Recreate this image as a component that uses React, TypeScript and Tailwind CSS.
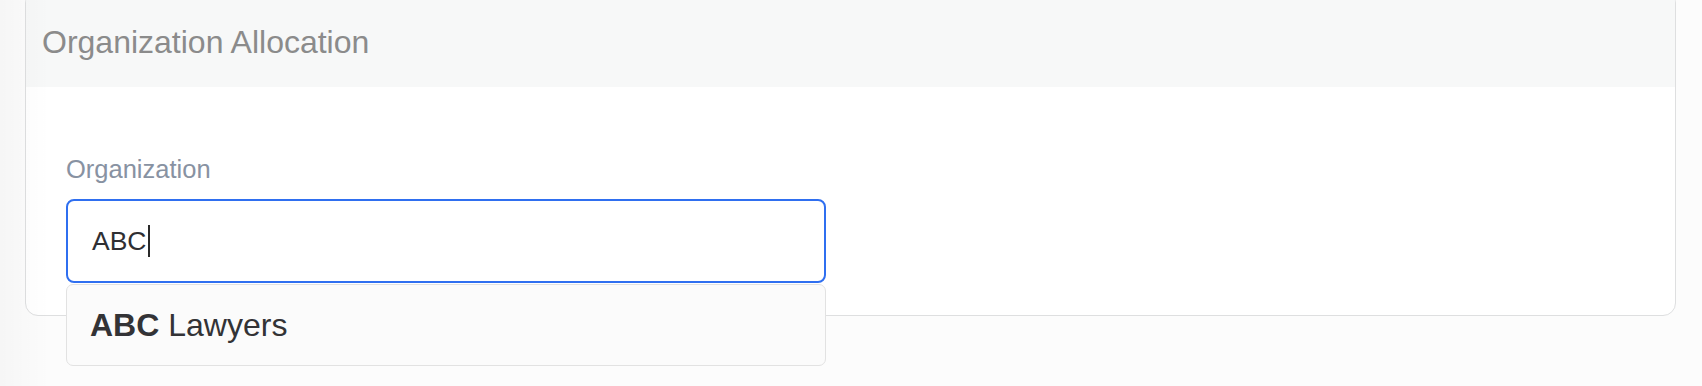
export default function App() {
  return (
    <div className="relative h-[386px] w-full overflow-hidden bg-[#fcfcfc] pl-[25px] pr-[26px] font-['Liberation_Sans',Arial,sans-serif]">
      <div className="-mt-[10px] rounded-[13px] border border-[#dedfe0] bg-white">
        <div className="rounded-t-[12px] bg-[#f7f8f8] pl-[16px] pt-[33px] pb-[27px]">
          <h2 className="text-[32px] leading-[36px] font-normal text-[#8b8b8b]">Organization Allocation</h2>
        </div>
        <div className="pl-[40px] pt-[67px] pb-[32px]">
          <label className="block text-[25.5px] leading-[30px] text-[#8892a2]">Organization</label>
          <div className="relative mt-[15px] w-[760px]">
            <div className="flex h-[84px] items-center rounded-[8px] border-2 border-[#2f6ff0] bg-white pl-[24px]">
              <span className="text-[26.5px] leading-[32px] text-[#2f2f33]">ABC</span>
              <span className="ml-[1px] h-[32px] w-[2px] bg-[#2a2a2a]" />
            </div>
            <div className="absolute left-0 top-[85px] flex h-[82px] w-[760px] items-center rounded-[7px] border border-[#e2e2e2] bg-[#fbfbfb] pl-[23px]">
              <span className="text-[32px] leading-[36px] text-[#333336]">
                <span className="font-bold">ABC</span> Lawyers
              </span>
            </div>
          </div>
        </div>
      </div>
      <div className="pointer-events-none absolute left-0 top-0 bottom-0 w-[50px] bg-linear-to-r from-black/[0.025] to-transparent" />
    </div>
  );
}
